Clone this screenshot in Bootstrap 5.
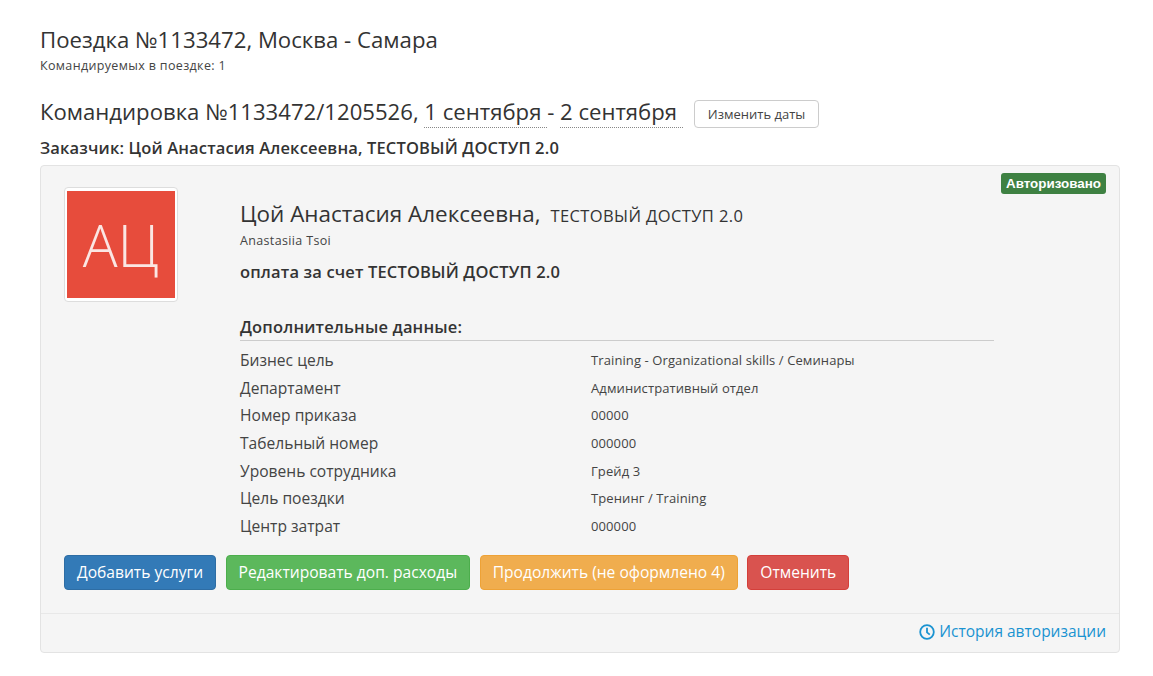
<!DOCTYPE html>
<html lang="ru">
<head>
  <meta charset="UTF-8">
  <title>Поездка №1133472</title>
  <link href="https://cdn.jsdelivr.net/npm/bootstrap@5.3.3/dist/css/bootstrap.min.css" rel="stylesheet">
  <style>
    body {
      font-family: "Open Sans", sans-serif;
      color: #333;
      background: #fff;
    }
    .page-wrap {
      padding: 24px 33px 0 40px;
    }
    .trip-title {
      font-size: 22.2px;
      line-height: 32px;
      font-weight: 400;
      margin: 0;
    }
    .trip-sub {
      font-size: 12.5px;
      letter-spacing: .35px;
      line-height: 16px;
      margin: 2px 0 0;
      color: #444;
    }
    .travel-head {
      margin-top: 21px;
      height: 32px;
    }
    .travel-title {
      font-size: 22.13px;
      line-height: 32px;
      font-weight: 400;
      margin: 0;
    }
    .date-link {
      border-bottom: 1px dotted #888;
      padding-bottom: 1px;
    }
    .date-btn {
      font-size: 13px;
      line-height: 16px;
      padding: 5px 12.5px;
      margin: 6px 0 0 11.5px;
      border: 1px solid #ccc;
      border-radius: 4px;
      color: #444;
      background: #fff;
    }
    .client-line {
      font-size: 16.5px;
      letter-spacing: .15px;
      line-height: 22px;
      font-weight: 600;
      margin: 10px 0 6px;
    }
    .panel-box {
      background: #f5f5f5;
      border: 1px solid #e3e3e3;
      border-radius: 4px;
      height: 488px;
      position: relative;
    }
    .auth-badge {
      position: absolute;
      top: 7px;
      right: 13px;
      background: #3e8142;
      color: #fff;
      font-family: "Liberation Sans", sans-serif;
      font-size: 13.4px;
      font-weight: 700;
      line-height: 21px;
      padding: 0 5px;
      border-radius: 3px;
    }
    .panel-main {
      height: 448px;
      padding: 21px 23px 0;
      border-bottom: 1px solid #e8e8e8;
    }
    .avatar-frame {
      width: 114px;
      height: 115px;
      padding: 3px 2px;
      background: #fff;
      border: 1px solid #ddd;
      border-radius: 4px;
      flex: none;
    }
    .avatar-tile {
      height: 100%;
      background: #e74c3c;
      color: #fbe6e3;
      font-size: 58px;
      font-weight: 300;
      line-height: 1;
    }
    .info-col {
      width: 754px;
      margin-left: 62px;
      padding-top: 12px;
    }
    .person-name {
      font-size: 22.45px;
      line-height: 30px;
      font-weight: 400;
      margin: 0;
    }
    .person-org {
      font-size: 16.5px;
      letter-spacing: .4px;
      margin-left: 4px;
    }
    .person-latin {
      font-size: 12.5px;
      letter-spacing: .35px;
      line-height: 16px;
      margin: 2px 0 0;
      color: #444;
    }
    .pay-line {
      font-size: 16.5px;
      letter-spacing: .15px;
      line-height: 22px;
      font-weight: 600;
      margin: 12px 0 0;
    }
    .extra-head {
      font-size: 16.5px;
      letter-spacing: .15px;
      line-height: 22px;
      font-weight: 600;
      margin: 33px 0 0;
      padding-bottom: 2px;
      border-bottom: 1px solid #ccc;
    }
    .extra-list {
      margin-top: 6px;
    }
    .extra-row {
      height: 27.67px;
      align-items: center;
    }
    .extra-label {
      width: 351px;
      font-size: 15.6px;
      color: #444;
    }
    .extra-val {
      font-size: 13px;
      letter-spacing: .1px;
      color: #444;
    }
    .action-row {
      gap: 9.5px;
      margin-top: 14px;
    }
    .action-btn {
      font-size: 15.6px;
      line-height: 21px;
      padding: 6px 12px;
      height: 35px;
      color: #fff;
      border-radius: 4px;
    }
    .act-blue { background: #337ab7; border: 1px solid #2e6da4; }
    .act-green { background: #5cb85c; border: 1px solid #4cae4c; }
    .act-orange { background: #f0ad4e; border: 1px solid #eea236; }
    .act-red { background: #d9534f; border: 1px solid #d43f3a; }
    .panel-foot {
      height: 36px;
      padding-right: 13px;
    }
    .history-link {
      font-size: 15.5px;
      color: #1a93d1;
      text-decoration: none;
    }
    .history-link svg {
      margin-right: 4px;
    }
  </style>
</head>
<body>
  <div class="page-wrap">
    <h1 class="trip-title">Поездка №1133472, Москва - Самара</h1>
    <p class="trip-sub">Командируемых в поездке: 1</p>

    <div class="travel-head d-flex align-items-center">
      <h2 class="travel-title">Командировка №1133472/1205526, <span class="date-link">1 сентября&nbsp;</span>- <span class="date-link">2 сентября&nbsp;</span></h2>
      <button type="button" class="btn date-btn">Изменить даты</button>
    </div>
    <p class="client-line">Заказчик: Цой Анастасия Алексеевна, ТЕСТОВЫЙ ДОСТУП 2.0</p>

    <div class="panel-box">
      <span class="auth-badge">Авторизовано</span>
      <div class="panel-main">
        <div class="d-flex">
          <div class="avatar-frame">
            <div class="avatar-tile d-flex justify-content-center align-items-center">АЦ</div>
          </div>
          <div class="info-col">
            <h3 class="person-name">Цой Анастасия Алексеевна, <span class="person-org">ТЕСТОВЫЙ ДОСТУП 2.0</span></h3>
            <p class="person-latin">Anastasiia Tsoi</p>
            <p class="pay-line">оплата за счет ТЕСТОВЫЙ ДОСТУП 2.0</p>
            <div class="extra-head">Дополнительные данные:</div>
            <div class="extra-list">
              <div class="extra-row d-flex"><div class="extra-label">Бизнес цель</div><div class="extra-val">Training - Organizational skills / Семинары</div></div>
              <div class="extra-row d-flex"><div class="extra-label">Департамент</div><div class="extra-val">Административный отдел</div></div>
              <div class="extra-row d-flex"><div class="extra-label">Номер приказа</div><div class="extra-val">00000</div></div>
              <div class="extra-row d-flex"><div class="extra-label">Табельный номер</div><div class="extra-val">000000</div></div>
              <div class="extra-row d-flex"><div class="extra-label">Уровень сотрудника</div><div class="extra-val">Грейд 3</div></div>
              <div class="extra-row d-flex"><div class="extra-label">Цель поездки</div><div class="extra-val">Тренинг / Training</div></div>
              <div class="extra-row d-flex"><div class="extra-label">Центр затрат</div><div class="extra-val">000000</div></div>
            </div>
          </div>
        </div>
        <div class="action-row d-flex">
          <button type="button" class="btn action-btn act-blue">Добавить услуги</button>
          <button type="button" class="btn action-btn act-green">Редактировать доп. расходы</button>
          <button type="button" class="btn action-btn act-orange">Продолжить (не оформлено 4)</button>
          <button type="button" class="btn action-btn act-red">Отменить</button>
        </div>
      </div>
      <div class="panel-foot d-flex justify-content-end align-items-center">
        <a href="#" class="history-link d-flex align-items-center">
          <svg width="16" height="16" viewBox="0 0 16 16" fill="none" stroke="currentColor"><circle cx="8" cy="8" r="6.8" stroke-width="1.8"/><path d="M8 3.8V8.4L10.8 10.6" stroke-width="1.8"/></svg>
          История авторизации
        </a>
      </div>
    </div>
  </div>
  <script src="https://cdn.jsdelivr.net/npm/bootstrap@5.3.3/dist/js/bootstrap.bundle.min.js"></script>
</body>
</html>
